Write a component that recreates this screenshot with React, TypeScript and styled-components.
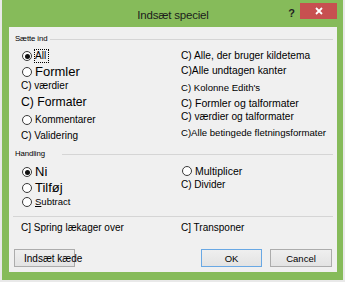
import React from "react";
import styled, { createGlobalStyle } from "styled-components";

const Global = createGlobalStyle`
  html, body { margin: 0; padding: 0; background: #e9e9e9; }
  body { font-family: "Liberation Sans", Arial, sans-serif; color: #000; }
  * { box-sizing: border-box; }
`;

const Window = styled.div`
  margin-left: 2px;
  width: 341px;
  height: 280px;
  background: #86bb5a;
  display: flex;
  flex-direction: column;
  padding: 0 6px 8px 7px;
`;

const TitleBar = styled.div`
  height: 27px;
  display: grid;
  grid-template-columns: 1fr auto 1fr;
  align-items: start;
`;

const Title = styled.div`
  grid-column: 2;
  padding-top: 8px;
  font-size: 11.5px;
  line-height: 14px;
  color: #1c1c1c;
  letter-spacing: -0.2px;
`;

const Controls = styled.div`
  grid-column: 3;
  justify-self: end;
  display: flex;
  align-items: flex-start;
  gap: 5px;
  padding-top: 3px;
`;

const Help = styled.span`
  font-size: 11px;
  font-weight: bold;
  line-height: 11px;
  margin-top: 5px;
  color: #222;
`;

const CloseBtn = styled.div`
  width: 37px;
  height: 16px;
  background: #c75050;
  display: flex;
  align-items: center;
  justify-content: center;
`;

const Panel = styled.div`
  flex: 1;
  background: #f0f0f0;
  display: flex;
  flex-direction: column;
  padding: 6px 4px 5px 5px;
`;

const GroupHeader = styled.div<{ $gap: number; $mt?: number }>`
  display: flex;
  align-items: center;
  height: 12px;
  padding-left: 1px;
  margin-top: ${(p) => p.$mt ?? 0}px;
  & > span {
    font-size: 7.8px;
    letter-spacing: -0.1px;
    line-height: 12px;
    color: #000;
  }
  &::after {
    content: "";
    flex: 1;
    height: 1px;
    background: #d5d5d5;
    margin-left: ${(p) => p.$gap}px;
  }
`;

const Columns = styled.div<{ $mt: number }>`
  display: grid;
  grid-template-columns: 160px 1fr;
  padding-left: 7px;
  margin-top: ${(p) => p.$mt}px;
`;

const Col = styled.div`
  display: flex;
  flex-direction: column;
`;

const Item = styled.div<{ $mt: number; $size?: number }>`
  height: 14px;
  margin-top: ${(p) => p.$mt}px;
  display: flex;
  align-items: center;
  gap: 3px;
  font-size: ${(p) => p.$size ?? 10}px;
  line-height: 14px;
  white-space: nowrap;
  color: #000;
`;

const Radio = styled.span<{ $checked?: boolean }>`
  width: 10px;
  height: 10px;
  margin-left: 1px;
  flex: none;
  border-radius: 50%;
  border: 1px solid #3a3a3a;
  background: #fff;
  display: flex;
  align-items: center;
  justify-content: center;
  &::after {
    content: "";
    width: 5px;
    height: 5px;
    border-radius: 50%;
    background: ${(p) => (p.$checked ? "#111" : "transparent")};
  }
`;

const Focus = styled.span`
  border: 1px dotted #000;
  padding: 0 2px 0 0;
  margin-left: -1px;
  line-height: 12px;
`;

const Separator = styled.div<{ $mt: number }>`
  height: 1px;
  background: #d5d5d5;
  margin-top: ${(p) => p.$mt}px;
  margin-left: -1px;
`;

const ButtonRow = styled.div`
  display: flex;
  margin-top: 14px;
  padding-right: 1px;
  gap: 8px;
`;

const Button = styled.div<{ $default?: boolean; $w: number; $size: number; $left?: boolean }>`
  width: ${(p) => p.$w}px;
  height: 18px;
  border: 1px solid ${(p) => (p.$default ? "#69a8e4" : "#acacac")};
  background: linear-gradient(#efefef, #e3e3e3);
  display: flex;
  align-items: center;
  justify-content: ${(p) => (p.$left ? "flex-start" : "center")};
  padding-left: ${(p) => (p.$left ? 9 : 0)}px;
  padding-top: 1px;
  font-size: ${(p) => p.$size}px;
  white-space: nowrap;
  overflow: visible;
  color: #000;
  &:first-child { margin-right: auto; }
`;

export default function App() {
  return (
    <>
      <Global />
      <Window>
        <TitleBar>
          <Title>Indsæt speciel</Title>
          <Controls>
            <Help>?</Help>
            <CloseBtn>
              <svg width="8" height="8" viewBox="0 0 8 8">
                <path d="M1 1 L7 7 M7 1 L1 7" stroke="#fff" strokeWidth="1.8" />
              </svg>
            </CloseBtn>
          </Controls>
        </TitleBar>
        <Panel>
          <GroupHeader $gap={3}>
            <span>Sætte ind</span>
          </GroupHeader>
          <Columns $mt={3}>
            <Col>
              <Item $mt={1}>
                <Radio $checked />
                <Focus>All</Focus>
              </Item>
              <Item $mt={2} $size={13}>
                <Radio />
                Formler
              </Item>
              <Item $mt={0}>C) værdier</Item>
              <Item $mt={2} $size={12.2}>C) Formater</Item>
              <Item $mt={4}>
                <Radio />
                Kommentarer
              </Item>
              <Item $mt={2}>C) Validering</Item>
            </Col>
            <Col>
              <Item $mt={1} $size={10.2}>C) Alle, der bruger kildetema</Item>
              <Item $mt={1} $size={10.3}>C)Alle undtagen kanter</Item>
              <Item $mt={3} $size={9.6}>C) Kolonne Edith's</Item>
              <Item $mt={1} $size={10.5}>C) Formler og talformater</Item>
              <Item $mt={0} $size={10.1}>C) værdier og talformater</Item>
              <Item $mt={2} $size={9.6}>C)Alle betingede fletningsformater</Item>
            </Col>
          </Columns>
          <GroupHeader $gap={17} $mt={5}>
            <span>Handling</span>
          </GroupHeader>
          <Columns $mt={0}>
            <Col>
              <Item $mt={5} $size={13}>
                <Radio $checked />
                Ni
              </Item>
              <Item $mt={2} $size={13}>
                <Radio />
                Tilføj
              </Item>
              <Item $mt={0} $size={9.5}>
                <Radio />
                <span>
                  <u>S</u>ubtract
                </span>
              </Item>
            </Col>
            <Col>
              <Item $mt={4} $size={10.5}>
                <Radio />
                Multiplicer
              </Item>
              <Item $mt={0}>C) Divider</Item>
            </Col>
          </Columns>
          <Separator $mt={7} />
          <Columns $mt={4}>
            <Col>
              <Item $mt={0}>C] Spring lækager over</Item>
            </Col>
            <Col>
              <Item $mt={0}>C] Transponer</Item>
            </Col>
          </Columns>
          <ButtonRow>
            <Button $w={61} $size={10} $left>
              Indsæt kæde
            </Button>
            <Button $w={61} $size={9.5} $default>
              OK
            </Button>
            <Button $w={62} $size={9.5}>
              Cancel
            </Button>
          </ButtonRow>
        </Panel>
      </Window>
    </>
  );
}
